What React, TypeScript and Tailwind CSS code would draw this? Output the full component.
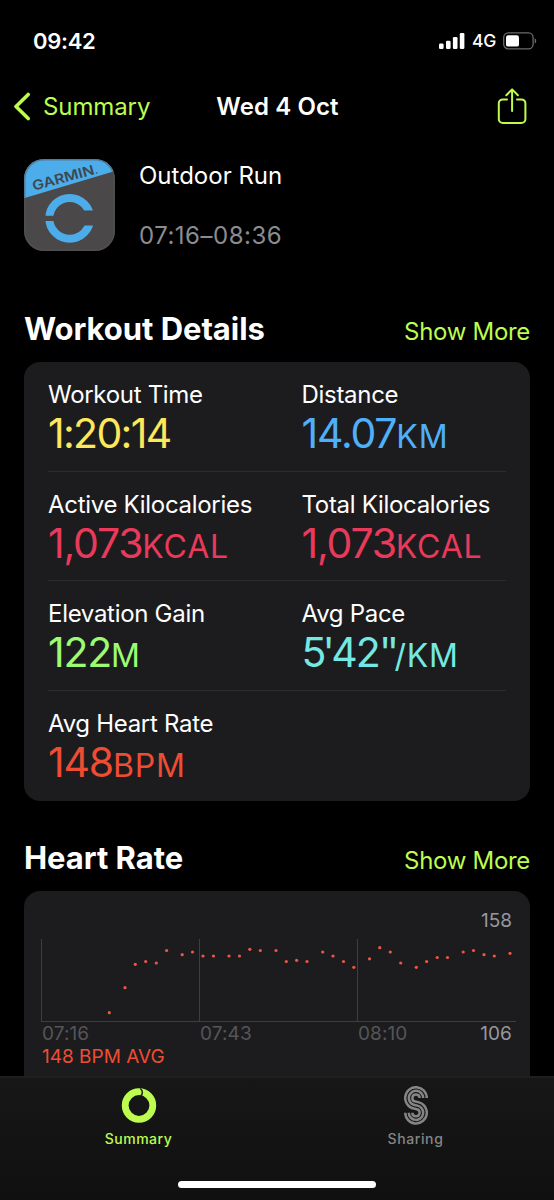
import { FC, ReactNode } from "react";

interface Metric {
  label: string;
  value: ReactNode;
  unit?: string;
  color: string;
}

const rows: Metric[][] = [
  [
    {
      label: "Workout Time",
      value: <span className="tracking-[-1.7px]">1:20:14</span>,
      color: "text-[#fde75b]",
    },
    { label: "Distance", value: "14.07", unit: "KM", color: "text-[#4fb0f9]" },
  ],
  [
    { label: "Active Kilocalories", value: "1,073", unit: "KCAL", color: "text-[#e93a5b]" },
    { label: "Total Kilocalories", value: "1,073", unit: "KCAL", color: "text-[#e93a5b]" },
  ],
  [
    { label: "Elevation Gain", value: "122", unit: "M", color: "text-[#9cfb73]" },
    {
      label: "Avg Pace",
      // the prime marks sit tighter than the digits
      value: (
        <>
          <span className="tracking-[-3.8px]">5'</span>
          <span className="tracking-[-1.8px]">42</span>
          <span className="tracking-[-4.6px]">''</span>
        </>
      ),
      unit: "/KM",
      color: "text-[#74e8e2]",
    },
  ],
  [{ label: "Avg Heart Rate", value: "148", unit: "BPM", color: "text-[#ee4d34]" }],
];

// [x, y] inside the 475x83 plot area
const samples = [
  [68.3, 73.7], [84, 48.7], [94.3, 25.3], [104.7, 22.5], [115.3, 24], [125.6, 11.5],
  [141.2, 15.7], [151.5, 13], [162, 17], [172.5, 17], [188, 17], [198.5, 17],
  [208.8, 10.3], [219.3, 11.5], [235, 11.5], [245.3, 22.5], [255.6, 21.3], [266, 22.5],
  [281.7, 13], [292, 17], [302.5, 22.5], [312.8, 28.3], [328.5, 19.8], [338.8, 8.7],
  [349.3, 13], [359.7, 24], [375.3, 28.3], [385.6, 22.5], [396.2, 18.5], [406.5, 18.5],
  [422.2, 13], [432.5, 11.5], [443, 15.7], [453.3, 17], [469, 14.3],
];

const StatusBar: FC = () => (
  <div className="flex h-[81px] shrink-0 items-center justify-between pl-[33px] pr-[17px]">
    <span className="text-[22px] leading-none font-semibold tracking-[-0.3px]">09:42</span>
    <div className="flex items-center">
      <svg width="26" height="16" viewBox="0 0 26 16" fill="#fff">
        <rect x="0" y="10.5" width="4.6" height="5.5" rx="1.3" />
        <rect x="7" y="7.8" width="4.6" height="8.2" rx="1.3" />
        <rect x="13.9" y="4" width="4.6" height="12" rx="1.3" />
        <rect x="20.8" y="0" width="4.6" height="16" rx="1.3" />
      </svg>
      <span className="ml-[7px] w-[24px] text-[17.5px] leading-none font-medium tracking-[-0.3px]">4G</span>
      <svg className="ml-[7px]" width="34" height="18" viewBox="0 0 34 18">
        <rect x="0.7" y="0.9" width="29.4" height="16" rx="4.6" fill="none" stroke="#6b6b6b" strokeWidth="1.3" />
        <rect x="3" y="3.2" width="13" height="11.4" rx="2.2" fill="#fff" />
        <path d="M31.7 6.2c2 .8 2 4.6 0 5.4z" fill="#6b6b6b" />
      </svg>
    </div>
  </div>
);

const NavBar: FC = () => (
  <div className="grid h-[52px] shrink-0 grid-cols-[1fr_auto_1fr] items-center pl-[13px] pr-[12px]">
    <button className="flex items-center text-[#bdfc4f]">
      <svg width="19" height="30" viewBox="0 0 19 30" fill="none" stroke="currentColor" strokeWidth="3.6" strokeLinecap="round" strokeLinejoin="round">
        <path d="M15.2 2.5 3 14.5l12.2 12" />
      </svg>
      <span className="ml-[11px] text-[24px] leading-none tracking-[-0.1px]">Summary</span>
    </button>
    <h1 className="text-[24px] leading-none font-semibold tracking-[0.1px]">Wed 4 Oct</h1>
    <button aria-label="Share" className="mr-[15px] -mt-[3px] justify-self-end text-[#bdfc4f]">
      <svg width="30" height="38" viewBox="0 0 30 38" fill="none" stroke="currentColor" strokeWidth="2" strokeLinecap="round" strokeLinejoin="round">
        <path d="M10 12.4H5.8a4 4 0 0 0-4 4V32a4 4 0 0 0 4 4h18.6a4 4 0 0 0 4-4V16.4a4 4 0 0 0-4-4H20" />
        <path d="M15.1 24V2.4M9.3 8.2l5.8-5.8 5.8 5.8" />
      </svg>
    </button>
  </div>
);

const GarminIcon: FC = () => (
  <svg width="91" height="92" viewBox="0 0 91 92">
    <defs>
      <clipPath id="tile">
        <rect width="91" height="92" rx="20" />
      </clipPath>
    </defs>
    <g clipPath="url(#tile)">
      <rect width="91" height="92" fill="#4a4849" />
      <path d="M0 0h91v12L0 39.3z" fill="#4dacea" />
    </g>
    <rect x="0.75" y="0.75" width="89.5" height="90.5" rx="19.3" fill="none" stroke="#555" strokeOpacity="0.55" strokeWidth="1.5" />
    <text
      transform="translate(9.8 31.8) rotate(-15.3)"
      fill="#3c4850"
      fontFamily="Inter, sans-serif"
      fontWeight="600"
      fontSize="13.5"
      textLength="67"
      lengthAdjust="spacingAndGlyphs"
    >
      GARMIN<tspan fontSize="9">.</tspan>
    </text>
    <circle cx="45.7" cy="59.3" r="20.4" fill="none" stroke="#4dacea" strokeWidth="8" />
    {/* ring gaps: narrow on the left, wide on the right */}
    <path d="M18 56.7h20V62H18zM56 51.5h18v15H56z" fill="#4a4849" />
  </svg>
);

const SectionHeader: FC<{ title: string }> = ({ title }) => (
  <div className="flex items-end justify-between">
    <h2 className="text-[31px] leading-[38px] font-bold tracking-[-0.05px]">{title}</h2>
    <button className="text-[24px] leading-[33px] tracking-[-0.3px] text-[#bdfc4f]">Show More</button>
  </div>
);

const MetricCell: FC<Metric> = ({ label, value, unit, color }) => (
  <div className="w-[253.5px] shrink-0 whitespace-nowrap">
    <div className="text-[24px] leading-[30px] tracking-[-0.3px]">{label}</div>
    <div className={`text-[41px] leading-[47px] tracking-[-1.2px] ${color}`}>
      {value}
      {unit && <span className="text-[32px] tracking-[0.8px]">{unit}</span>}
    </div>
  </div>
);

const HeartRateChart: FC = () => (
  <div className="h-[220px] rounded-2xl bg-[#1c1c1e] pt-[18px] pr-[14px] pl-[17px] text-[19px]">
    <div className="pr-1 text-right leading-[23px] text-[#98979d]">158</div>
    <svg className="mt-[7px] block" width="475" height="83" viewBox="0 0 475 83">
      <path d="M0.5 0v83M158.5 0v83M316.5 0v83M0 82.5h475" stroke="#3e3e40" />
      {samples.map(([x, y]) => (
        <circle key={x} cx={x} cy={y} r="1.6" fill="#f05545" />
      ))}
    </svg>
    <div className="flex pl-px leading-[23px] tracking-[0.1px] text-[#555558]">
      <span className="w-[158px]">07:16</span>
      <span className="w-[158px]">07:43</span>
      <span>08:10</span>
      <span className="ml-auto pr-1 text-[#98979d]">106</span>
    </div>
    <div className="pl-px leading-[23px] text-[#ee4d34]">148 BPM AVG</div>
  </div>
);

const TabBar: FC = () => (
  <nav className="absolute inset-x-0 bottom-0 h-[124px] border-t-2 border-[#1f1f20] bg-linear-to-b from-[#171717] to-[#101010]">
    <div className="flex">
      <button className="flex flex-1 flex-col items-center pt-[8px] text-[#bdfc4f]">
        <svg width="36" height="40" viewBox="0 0 36 40" fill="none">
          <circle cx="18" cy="19.5" r="13.8" stroke="currentColor" strokeWidth="6.8" />
          <path d="M19.3 2.5c2.7 2 2.7 5.4.3 7.5" stroke="#161616" strokeWidth="1.4" />
        </svg>
        <span className="mt-[3px] text-[14px] leading-[20px] font-medium tracking-[0.5px]">Summary</span>
      </button>
      <button className="flex flex-1 flex-col items-center pt-[8px] text-[#858585]">
        <svg width="24" height="40" viewBox="0 0 24 40" fill="none" stroke="currentColor" strokeWidth="2.5">
          <path d="M22.8 12A10.8 10.8 0 1 0 9.83 22.58L12.72 23.17A3.6 3.6 0 1 1 8.4 26.7" />
          <path d="M19.2 12A7.2 7.2 0 1 0 10.55 19.06L13.45 19.64A7.2 7.2 0 1 1 4.8 26.7" />
          <path d="M15.6 12A3.6 3.6 0 1 0 11.28 15.53L14.17 16.12A10.8 10.8 0 1 1 1.2 26.7" />
        </svg>
        <span className="mt-[3px] text-[14px] leading-[20px] font-medium tracking-[0.6px]">Sharing</span>
      </button>
    </div>
    <div className="mx-auto mt-[32px] h-[7px] w-[198px] rounded-full bg-white" />
  </nav>
);

export default function App() {
  return (
    <div className="relative flex h-[1200px] w-[554px] flex-col overflow-hidden bg-black font-['Inter',sans-serif] text-white">
      <StatusBar />
      <NavBar />
      <main className="px-6 pt-[26px]">
        <div className="flex gap-[24px]">
          <GarminIcon />
          <div className="pt-px">
            <div className="text-[24px] leading-[32px]">Outdoor Run</div>
            <div className="mt-[28px] text-[24px] leading-[32px] tracking-[0.5px] text-[#8b8b90]">07:16–08:36</div>
          </div>
        </div>

        <section className="mt-[58px]">
          <SectionHeader title="Workout Details" />
          <div className="mt-[14px] h-[439px] rounded-2xl bg-[#1c1c1e] px-6">
            {rows.map((row, i) => (
              <div
                key={i}
                className="flex h-[109.7px] border-b border-[#2d2d2f] pt-[18px] last:border-0"
              >
                {row.map((metric) => (
                  <MetricCell key={metric.label} {...metric} />
                ))}
              </div>
            ))}
          </div>
        </section>

        <section className="mt-[38px]">
          <SectionHeader title="Heart Rate" />
          <div className="mt-[14px]">
            <HeartRateChart />
          </div>
        </section>
      </main>
      <TabBar />
    </div>
  );
}
